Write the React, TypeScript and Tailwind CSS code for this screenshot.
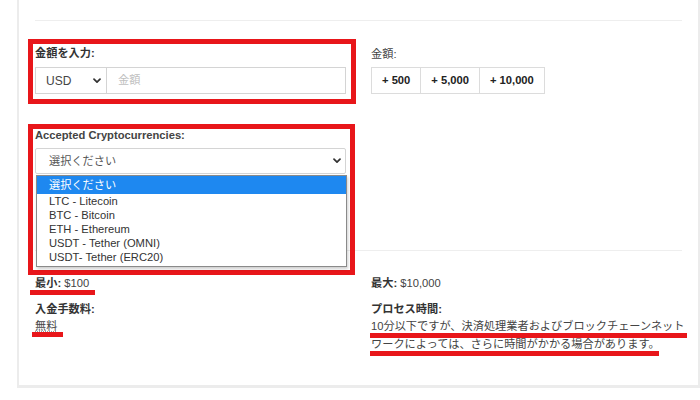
import React from 'react';

const Chevron: React.FC = () => (
  <svg width="8" height="6" viewBox="0 0 8 6" className="shrink-0">
    <path d="M1 1.2l3 3 3-3" fill="none" stroke="#333" strokeWidth="1.7" strokeLinecap="round" strokeLinejoin="round" />
  </svg>
);

const RedBox: React.FC<{ className: string }> = ({ className }) => (
  <div className={`pointer-events-none absolute border-[5px] border-[#e8161a] ${className}`} />
);

const RedLine: React.FC<{ className: string }> = ({ className }) => (
  <div className={`pointer-events-none absolute h-[5px] bg-[#e8161a] ${className}`} />
);

const options = ['LTC - Litecoin', 'BTC - Bitcoin', 'ETH - Ethereum', 'USDT - Tether (OMNI)', 'USDT- Tether (ERC20)'];

const App: React.FC = () => {
  return (
    <div className="w-[700px] h-[400px] overflow-hidden bg-white text-[11.2px] text-[#333] font-['Liberation_Sans','Noto_Sans_CJK_JP',sans-serif]">
      <div className="ml-[17px] w-[683px] h-[388px] border-x-2 border-b-[3px] border-[#ececec] pl-[16px] pr-[16px] pt-[20px]">
        <div className="h-px bg-[#eeeeee]" />

        {/* amount row */}
        <div className="grid grid-cols-2 gap-x-[25px] mt-[23px]">
          <div className="relative">
            <RedBox className="-left-[7px] -top-[5px] -right-[10px] -bottom-[10px]" />
            <div className="font-bold leading-[18px] mb-[5px]">金額を入力:</div>
            <div className="flex h-[27px]">
              <div className="flex w-[72px] items-center justify-between border border-[#d4d4d4] pl-[10px] pr-[5px] text-[12px] text-[#444]">
                <span>USD</span>
                <Chevron />
              </div>
              <div className="flex flex-1 items-center -ml-px border border-[#d4d4d4] pl-[11px] text-[#c0c0c0]">金額</div>
            </div>
          </div>
          <div className="pt-px">
            <div className="leading-[18px] mb-[4px] text-[#444]">金額:</div>
            <div className="flex h-[27px]">
              {['+ 500', '+ 5,000', '+ 10,000'].map((v, i) => (
                <div
                  key={v}
                  className={`flex items-center border border-[#dcdcdc] px-[10px] font-bold text-[#222] ${i > 0 ? '-ml-px' : ''}`}
                >
                  {v}
                </div>
              ))}
            </div>
          </div>
        </div>

        {/* crypto row */}
        <div className="grid grid-cols-2 gap-x-[25px] mt-[35px]">
          <div className="relative">
            <RedBox className="-left-[7px] -top-[5px] -right-[9px] -bottom-[101px]" />
            <div className="font-bold leading-[13px] mb-[6px] text-[#444]">Accepted Cryptocurrencies:</div>
            <div className="relative">
              <div className="flex h-[26px] items-center justify-between border border-[#d4d4d4] rounded-[2px] pl-[13px] pr-[4px] text-[#555]">
                <span>選択ください</span>
                <Chevron />
              </div>
              <div className="absolute left-px top-[27px] w-[311px] border border-[#8a8a8a] bg-white pb-[2px] shadow-[1px_2px_3px_rgba(0,0,0,0.2)] text-[#333]">
                <div className="flex h-[18px] items-center bg-[#1e88f0] pl-[12px] text-white">選択ください</div>
                {options.map((o) => (
                  <div key={o} className="flex h-[14px] items-center pl-[12px]">{o}</div>
                ))}
              </div>
            </div>
          </div>
          <div />
        </div>

        <div className="h-px bg-[#eeeeee] mt-[76px]" />

        {/* limits */}
        <div className="grid grid-cols-2 gap-x-[25px] mt-[24px]">
          <div>
            <div className="relative leading-[16px]">
              <RedLine className="-left-[5px] top-[15px] w-[65px] h-[4px]" />
              <span className="font-bold">最小:</span> <span className="text-[#444]">$100</span>
            </div>
            <div className="font-bold leading-[16px] mt-[10px]">入金手数料:</div>
            <div className="relative leading-[18px] text-[#444]">
              <RedLine className="-left-[3px] top-[15px] w-[31px]" />
              <span className="underline decoration-dotted decoration-[#999]">無料</span>
            </div>
          </div>
          <div>
            <div className="leading-[16px]">
              <span className="font-bold">最大:</span> <span className="text-[#444]">$10,000</span>
            </div>
            <div className="font-bold leading-[16px] mt-[10px]">プロセス時間:</div>
            <div className="leading-[18px] text-[#444] whitespace-nowrap">
              <div className="relative">
                <RedLine className="-left-px top-[16px] w-[317px]" />
                10分以下ですが、決済処理業者およびブロックチェーンネット
              </div>
              <div className="relative">
                <RedLine className="-left-px top-[16px] w-[289px]" />
                ワークによっては、さらに時間がかかる場合があります。
              </div>
            </div>
          </div>
        </div>
      </div>
    </div>
  );
};

export default App;
